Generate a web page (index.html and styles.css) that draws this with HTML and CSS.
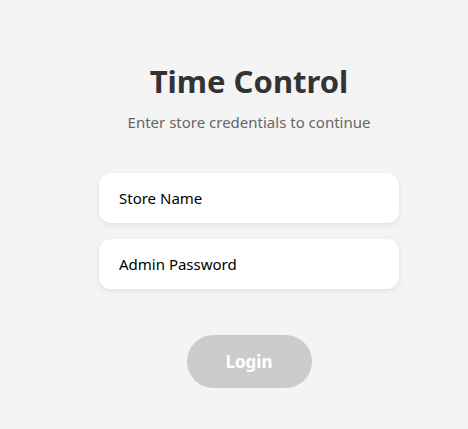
FILE: index.html
```html
<!DOCTYPE html>
<html>
<head>
<meta charset="utf-8">
<link rel="stylesheet" href="styles.css">
</head>
<body>
<main class="page">
  <div class="login">
    <h1 class="title">Time Control</h1>
    <p class="subtitle">Enter store credentials to continue</p>
    <div class="fields">
      <input class="field" type="text" placeholder="Store Name">
      <input class="field" type="password" placeholder="Admin Password">
    </div>
    <button class="btn" type="button">Login</button>
  </div>
</main>
</body>
</html>
```

FILE: styles.css
```css
html, body {
  margin: 0;
  padding: 0;
  background: #f4f4f4;
  height: 100%;
}
body {
  font-family: "Noto Sans", "Open Sans", sans-serif;
}
.page {
  display: flex;
  justify-content: center;
  padding: 59px 0 0 30px;
}
.login {
  width: 300px;
  display: flex;
  flex-direction: column;
  align-items: center;
}
.title {
  margin: 0;
  font-size: 31px;
  font-weight: 700;
  color: #333;
  line-height: 44px;
}
.subtitle {
  margin: 8px 0 0;
  font-size: 15px;
  color: #666;
  line-height: 22px;
}
.fields {
  margin-top: 40px;
  width: 100%;
  display: flex;
  flex-direction: column;
  gap: 16px;
}
.field {
  box-sizing: border-box;
  width: 100%;
  height: 50px;
  border: none;
  border-radius: 12px;
  background: #fff;
  box-shadow: 0 2px 6px rgba(0,0,0,0.08);
  padding: 0 20px;
  font-family: inherit;
  font-size: 15px;
  outline: none;
}
.field::placeholder {
  color: #000;
}
.btn {
  margin-top: 46px;
  width: 125px;
  height: 53px;
  border: none;
  border-radius: 27px;
  background: #cccccc;
  color: #fff;
  font-family: inherit;
  font-size: 17px;
  font-weight: 700;
}
```
